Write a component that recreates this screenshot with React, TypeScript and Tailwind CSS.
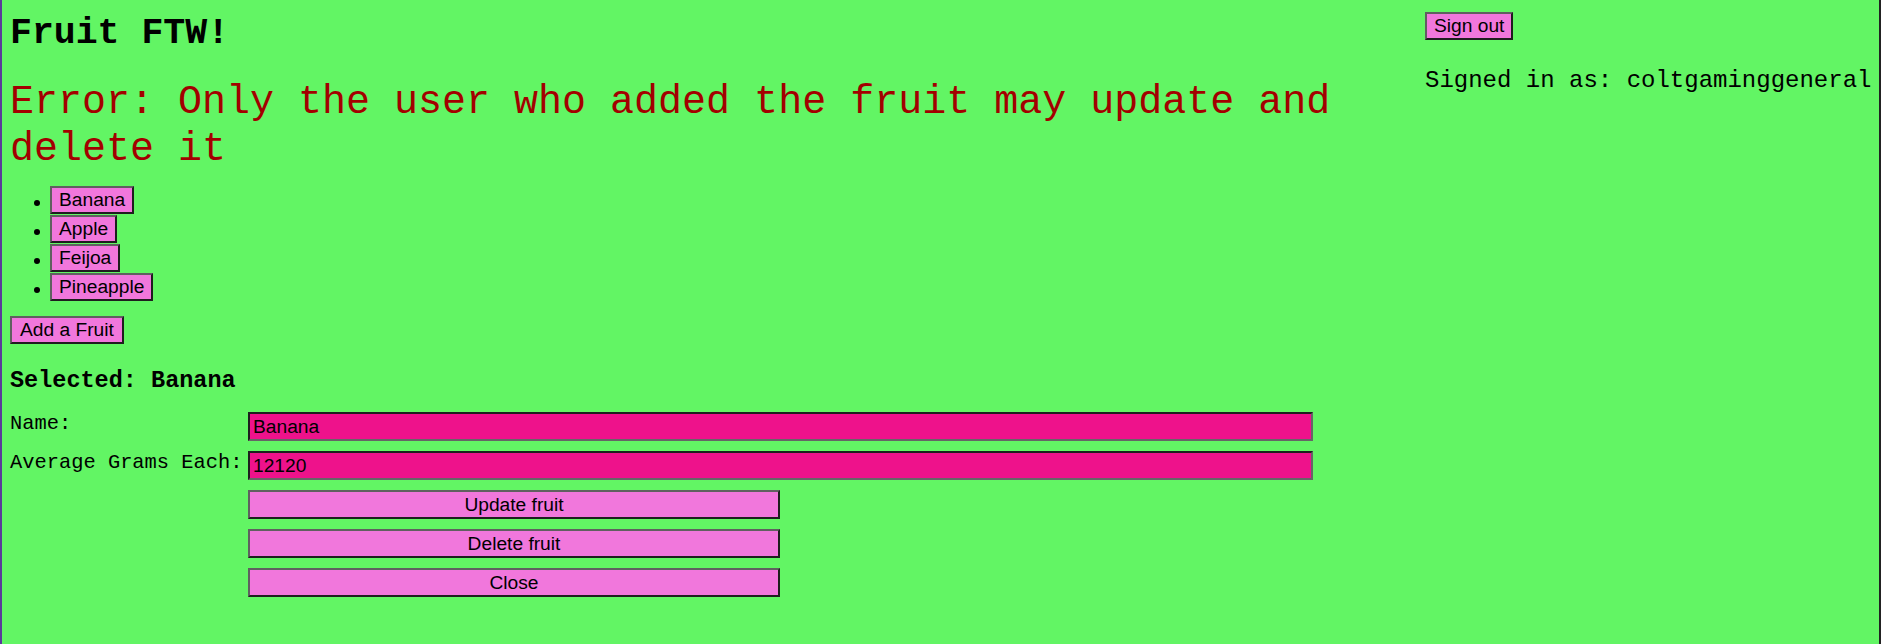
import React from "react";

const fruits = ["Banana", "Apple", "Feijoa", "Pineapple"];

const mono = "font-['Liberation_Mono','Courier_New',monospace]";
const sans = "font-['Liberation_Sans',Arial,sans-serif]";

const btn =
  "h-[28px] border-2 border-t-[#606060] border-l-[#606060] border-b-[#1e1e1e] border-r-[#1e1e1e] bg-[#f177dc] px-[7px] text-[19.2px] leading-[22px] text-black " +
  sans;

const wideBtn =
  "h-[29px] w-[532px] border-2 border-t-[#606060] border-l-[#606060] border-b-[#1e1e1e] border-r-[#1e1e1e] bg-[#f177dc] text-center text-[19.2px] leading-[22px] text-black " +
  sans;

const field =
  "h-[29px] w-[1065px] border-2 border-t-[#1e1e1e] border-l-[#1e1e1e] border-b-[#666666] border-r-[#666666] bg-[#ee128b] px-[3px] text-[19.2px] leading-[22px] text-black outline-none " +
  sans;

export default function App() {
  return (
    <div
      className={`flex min-h-[644px] w-full border-l-2 border-r-2 border-l-[#5a3a9a] border-r-[#222222] bg-[#62f564] text-black ${mono}`}
    >
      <main className="w-[1423px] shrink-0 pl-[8px]">
        <h1 className="pt-[12px] text-[36.5px] font-bold leading-[44px]">Fruit FTW!</h1>

        <h2 className="mt-[23px] text-[40px] font-normal leading-[47px] text-[#a30000]">
          Error: Only the user who added the fruit may update and delete it
        </h2>

        <ul className="mt-[13px] pl-[40px]">
          {fruits.map((f) => (
            <li key={f} className="relative flex h-[29px] items-start">
              <span className="absolute left-[-16px] top-[14px] h-[6px] w-[6px] rounded-full bg-black" />
              <button type="button" className={btn}>
                {f}
              </button>
            </li>
          ))}
        </ul>

        <button type="button" className={`mt-[14px] px-[8px] ${btn}`}>
          Add a Fruit
        </button>

        <h3 className="mt-[23px] text-[23.5px] font-bold leading-[27px]">Selected: Banana</h3>

        <div className="mt-[18px] grid grid-cols-[238px_1fr] gap-y-[10px]">
          <label className="text-[20.4px] leading-[23px]">Name:</label>
          <input className={field} defaultValue="Banana" />
          <label className="text-[20.4px] leading-[23px]">Average Grams Each:</label>
          <input className={field} defaultValue="12120" />
          <div />
          <button type="button" className={wideBtn}>
            Update fruit
          </button>
          <div />
          <button type="button" className={wideBtn}>
            Delete fruit
          </button>
          <div />
          <button type="button" className={wideBtn}>
            Close
          </button>
        </div>
      </main>

      <aside className="flex flex-col items-start">
        <button type="button" className={`mt-[12px] ${btn}`}>
          Sign out
        </button>
        <p className="mt-[27px] whitespace-nowrap text-[24px] leading-[27px]">
          Signed in as: coltgaminggeneral
        </p>
      </aside>
    </div>
  );
}
